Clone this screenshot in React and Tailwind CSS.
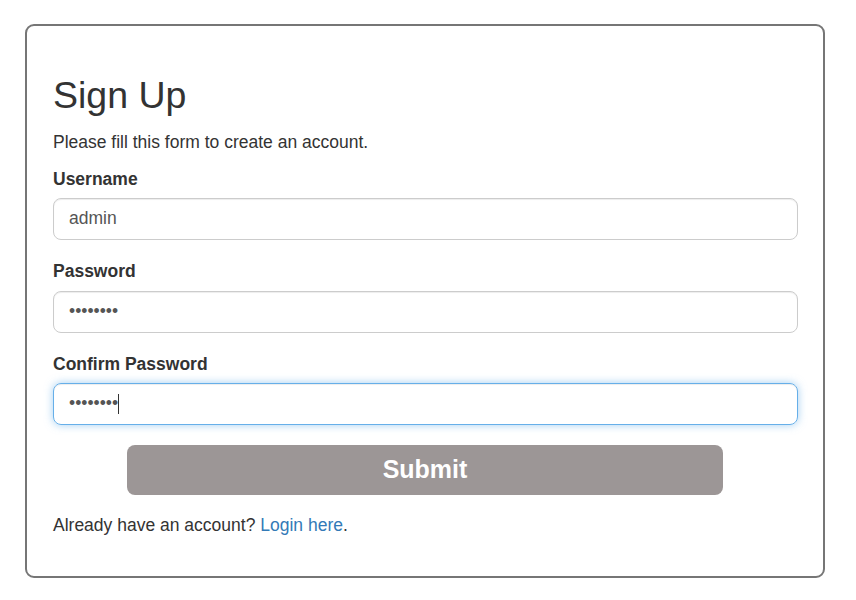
export default function App() {
  return (
    <div className="min-h-[600px] w-[856px] bg-white pt-[24px] pl-[25px] font-['Liberation_Sans',Arial,sans-serif] text-[#333]">
      <div className="w-[800px] h-[554px] rounded-[9px] border-2 border-[#767676] pl-[26px] pr-[25px] pt-[50px]">
        <h2 className="text-[37.5px] leading-[39.6px] font-normal">Sign Up</h2>
        <p className="mt-[15px] text-[17.5px] leading-[23px]">Please fill this form to create an account.</p>
        <form className="mt-[14px]" onSubmit={(e) => e.preventDefault()}>
          <div className="mb-[20px]">
            <label className="block text-[17.5px] leading-[23px] font-bold mb-[7px]">Username</label>
            <input
              type="text"
              defaultValue="admin"
              className="block w-full h-[42px] rounded-[8px] border border-[#ccc] px-[15px] text-[17.5px] text-[#555] shadow-[inset_0_1px_1px_rgba(0,0,0,0.075)] outline-none"
            />
          </div>
          <div className="mb-[20px]">
            <label className="block text-[17.5px] leading-[23px] font-bold mb-[8px]">Password</label>
            <input
              type="password"
              defaultValue="password"
              className="block w-full h-[42px] rounded-[8px] border border-[#ccc] px-[15px] text-[17.5px] text-[#555] shadow-[inset_0_1px_1px_rgba(0,0,0,0.075)] outline-none"
            />
          </div>
          <div className="mb-[20px]">
            <label className="block text-[17.5px] leading-[23px] font-bold mb-[7px]">Confirm Password</label>
            <div className="relative">
              <input
                type="password"
                defaultValue="password"
                className="block w-full h-[42px] rounded-[8px] border border-[#66afe9] px-[15px] text-[17.5px] text-[#555] shadow-[inset_0_1px_1px_rgba(0,0,0,0.075),0_0_8px_rgba(102,175,233,0.6)] outline-none"
              />
              <span className="absolute left-[65px] top-[11px] h-[20px] w-px bg-[#333]" />
            </div>
          </div>
          <button
            type="submit"
            className="block ml-[74px] w-[596px] h-[50px] rounded-[8px] bg-[#9c9696] text-white text-[25px] font-bold"
          >
            Submit
          </button>
        </form>
        <p className="mt-[19px] text-[17.5px] leading-[23px]">
          Already have an account? <a href="#" className="text-[#337ab7]">Login here</a>.
        </p>
      </div>
    </div>
  );
}
